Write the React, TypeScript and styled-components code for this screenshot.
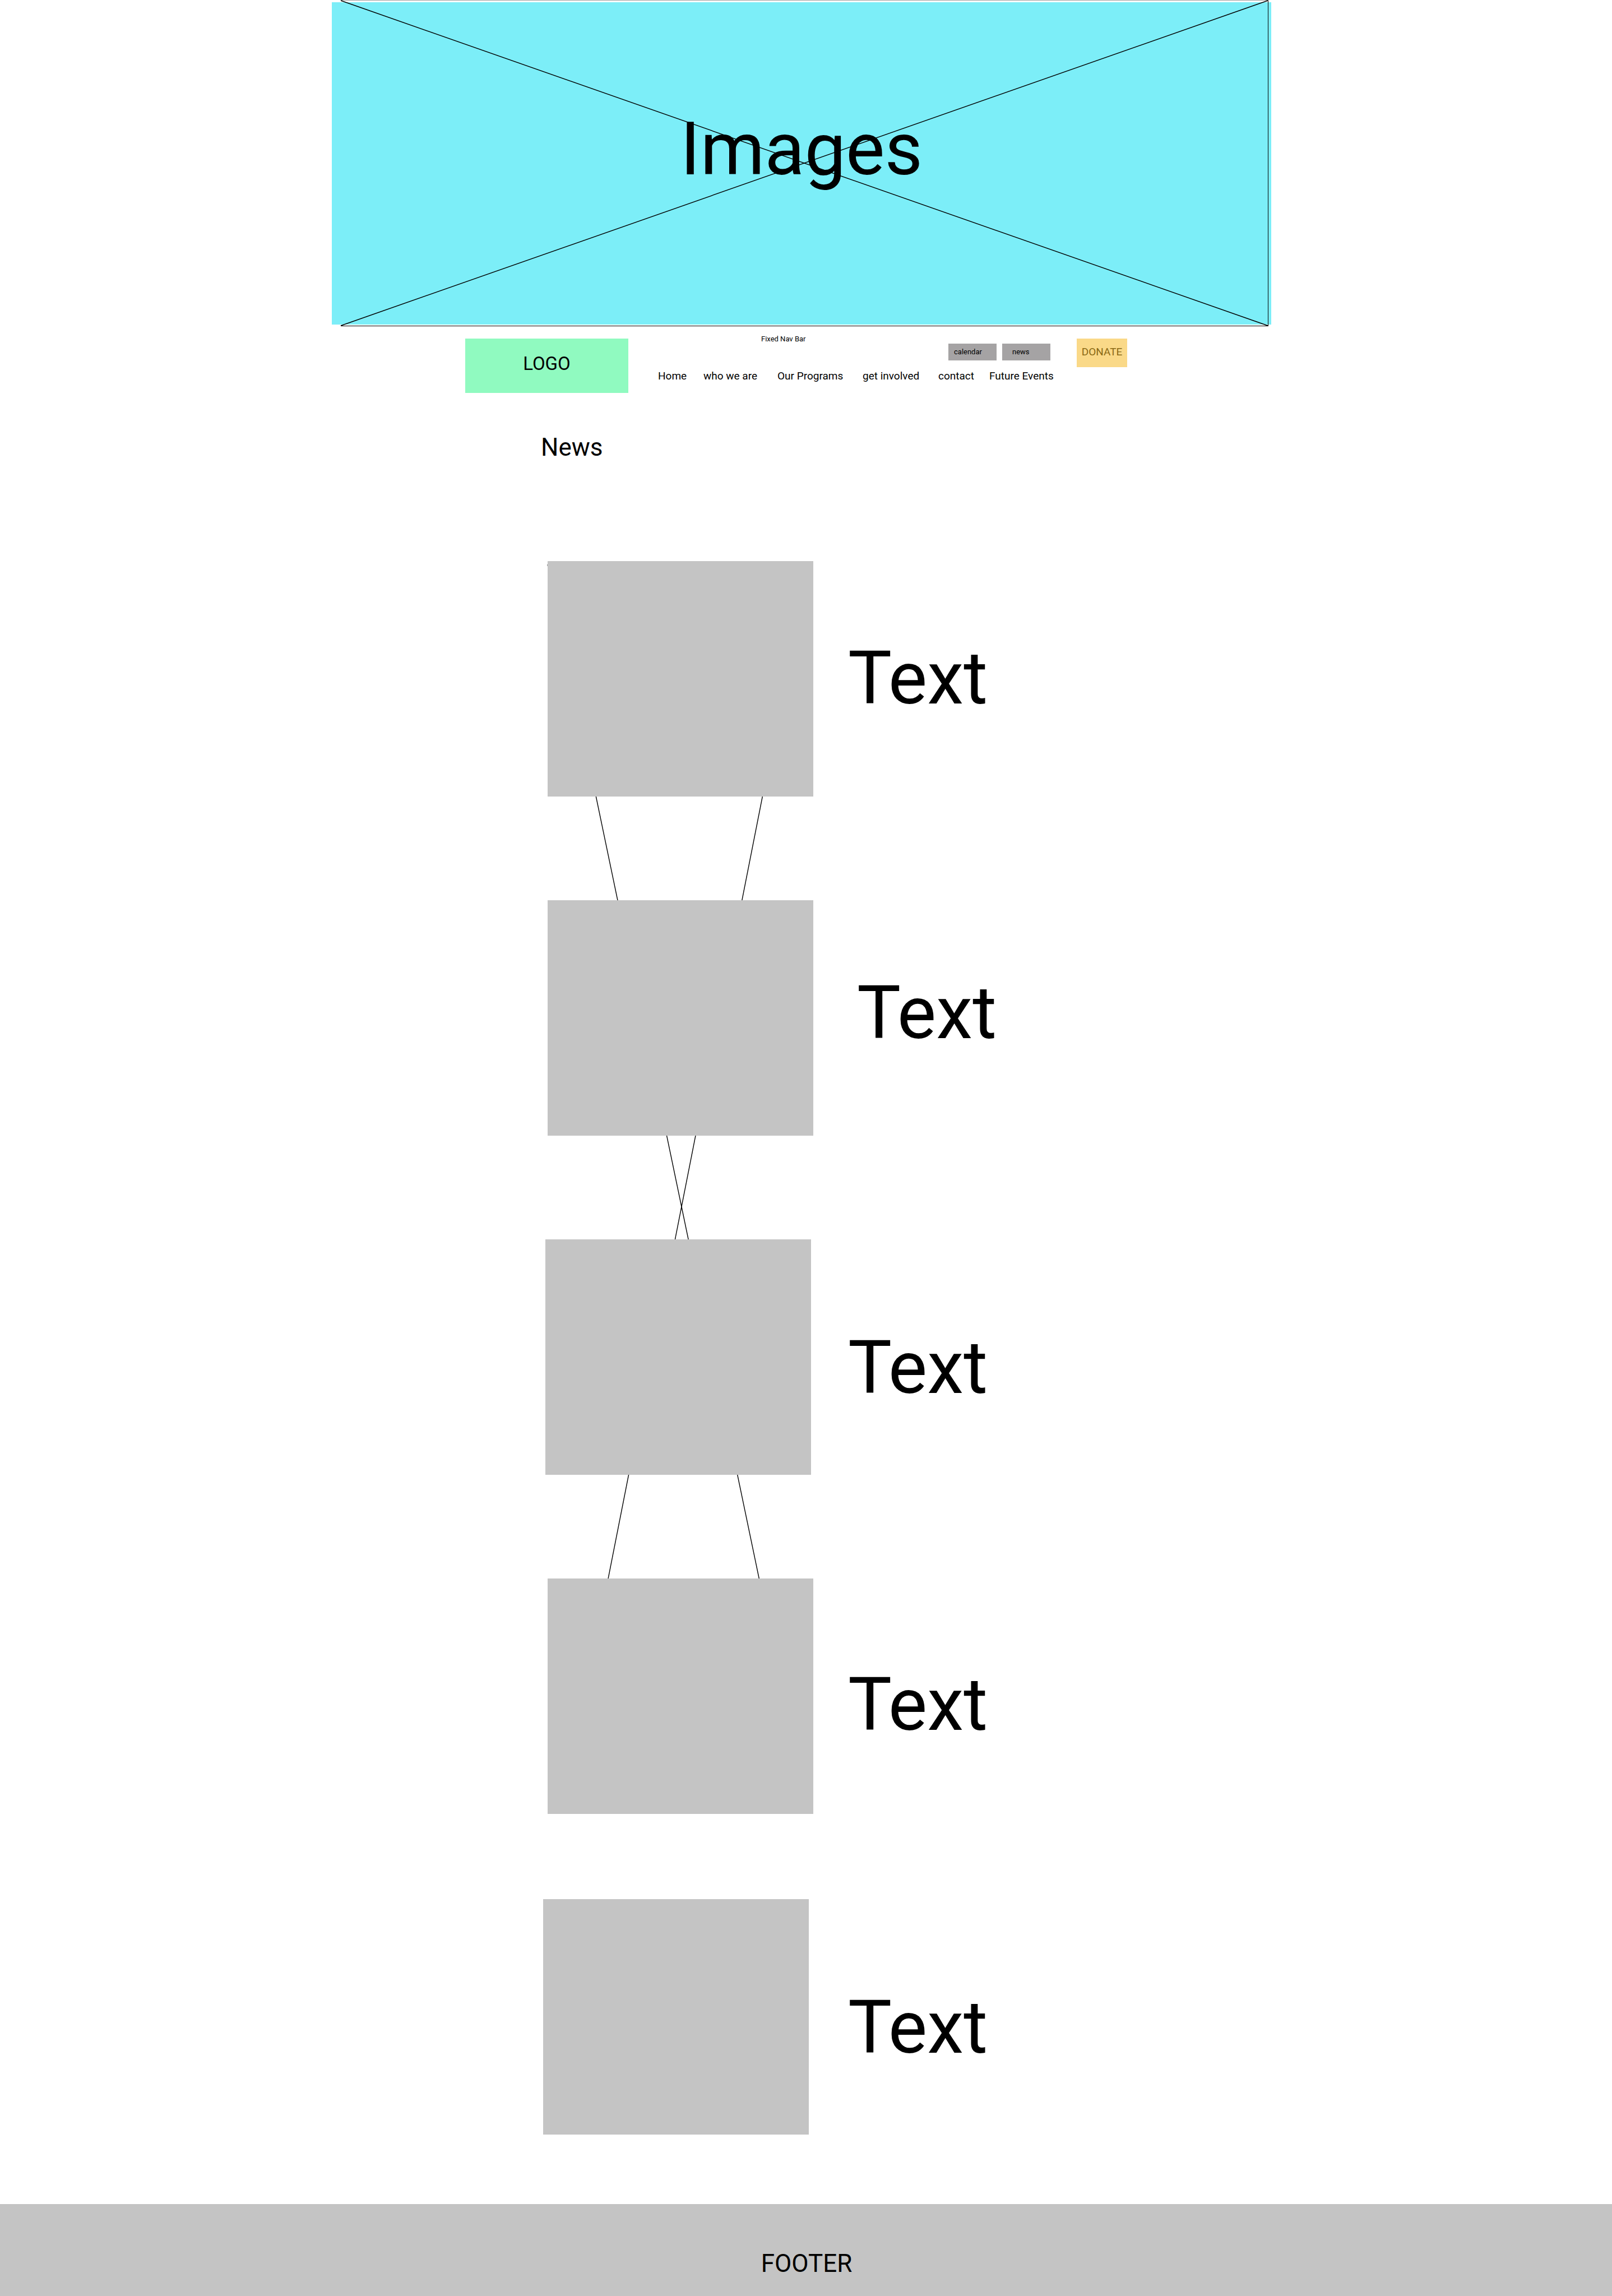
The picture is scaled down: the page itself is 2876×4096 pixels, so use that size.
import React from "react";
import styled, { createGlobalStyle } from "styled-components";

const GlobalStyle = createGlobalStyle`
  *, *::before, *::after { box-sizing: border-box; }
  body {
    margin: 0;
    background: #ffffff;
    color: #000000;
    font-family: Roboto, "Liberation Sans", sans-serif;
  }
  h1, h2, p, ul, figure { margin: 0; padding: 0; font-weight: 400; }
  a { color: inherit; text-decoration: none; }
`;

const Page = styled.div`
  display: flex;
  flex-direction: column;
  min-height: 100vh;
`;

const Container = styled.div`
  width: 100%;
  max-width: 1692px;
  margin: 0 auto;
`;

const HeroArea = styled(Container)`
  padding: 4px 16px 0 0;
`;

const Hero = styled.section`
  position: relative;
  display: flex;
  justify-content: center;
  height: 575px;
  padding-top: 185px;
  background: #7ceef8;
`;

const HeroFrame = styled.div`
  position: absolute;
  inset: -4px 5px -3px 16px;
  border: 1px solid #000000;
  border-top-color: #a0a0a0;
  border-left: 0;
`;

const Drawing = styled.svg`
  display: block;
  width: 100%;
  height: 100%;
  overflow: visible;

  line {
    stroke: #000000;
    stroke-width: 1.4;
  }
`;

const Display = styled.p`
  position: relative;
  font-size: 131px;
  line-height: 154px;
`;

const NavBar = styled(Container)`
  display: grid;
  grid-template-columns: 291px 706px 90px;
  column-gap: 47px;
  justify-content: start;
  align-items: start;
  padding: 25px 0 0 238px;
`;

const Logo = styled.a`
  display: flex;
  justify-content: center;
  height: 97px;
  padding-top: 26px;
  background: #90fac0;
  font-size: 33px;
  line-height: 38px;
`;

const NavCenter = styled.div`
  display: flex;
  flex-direction: column;
  padding-left: 6px;
`;

const NavTop = styled.div`
  display: flex;
  justify-content: space-between;
  align-items: flex-start;
  height: 56px;
  padding-left: 184px;
`;

const NavCaption = styled.p`
  font-size: 13px;
  line-height: 16px;
  margin-top: -7px;
`;

const QuickLinks = styled.div`
  display: flex;
  gap: 10px;
  padding-top: 9px;
`;

const QuickButton = styled.button<{ $inset: number }>`
  width: 86px;
  height: 30px;
  padding: 0 0 0 ${(p) => p.$inset}px;
  border: 0;
  background: #a5a3a4;
  color: #000000;
  font: inherit;
  font-size: 13px;
  line-height: 16px;
  text-align: left;
`;

const Menu = styled.ul`
  display: grid;
  grid-template-columns: 81px 132px 152px 135px 91px auto;
  list-style: none;
  font-size: 19px;
  line-height: 22px;
  white-space: nowrap;
`;

const DonateButton = styled.button`
  height: 51px;
  padding: 0 0 4px;
  border: 0;
  background: #fad988;
  color: #8a6914;
  font: inherit;
  font-size: 19px;
  line-height: 22px;
`;

const News = styled(Container)`
  padding: 71px 0 124px 377px;
`;

const Heading = styled.h1`
  margin: 0 0 177px -4px;
  font-size: 44px;
  line-height: 52px;
`;

const Feed = styled.div`
  position: relative;
  display: flex;
  flex-direction: column;
  gap: 185px;

  & > :last-child {
    margin-top: -33px;
  }
`;

const Connectors = styled.div`
  position: absolute;
  top: 6px;
  left: 8px;
  width: 466px;
  height: 2220px;
`;

const Story = styled.article<{ $indent: number }>`
  position: relative;
  display: grid;
  grid-template-columns: 544px auto;
  justify-content: start;

  & > figure {
    margin-left: ${(p) => p.$indent}px;
  }
`;

const Thumbnail = styled.figure`
  width: 474px;
  height: 420px;
  background: #c4c4c4;
`;

const StoryText = styled(Display)<{ $drop: number; $indent: number }>`
  padding: ${(p) => p.$drop}px 0 0 ${(p) => p.$indent}px;
`;

const Footer = styled.footer`
  display: flex;
  justify-content: center;
  height: 164px;
  padding: 80px 0 0 2px;
  background: #c4c4c4;
  font-size: 44px;
  line-height: 52px;
`;

const links = ["Home", "who we are", "Our Programs", "get involved", "contact", "Future Events"];

const stories = [
  { id: 1, indent: 8, drop: 132, textIndent: 0 },
  { id: 2, indent: 8, drop: 124, textIndent: 16 },
  { id: 3, indent: 4, drop: 152, textIndent: 0 },
  { id: 4, indent: 8, drop: 148, textIndent: 0 },
  { id: 5, indent: 0, drop: 152, textIndent: 0 },
];

export default function App() {
  return (
    <Page>
      <GlobalStyle />
      <HeroArea>
        <Hero>
          <HeroFrame>
            <Drawing aria-hidden="true">
              <line x1="0" y1="0" x2="100%" y2="100%" />
              <line x1="0" y1="100%" x2="100%" y2="0" />
            </Drawing>
          </HeroFrame>
          <Display>Images</Display>
        </Hero>
      </HeroArea>

      <NavBar as="header">
        <Logo href="#">LOGO</Logo>
        <NavCenter>
          <NavTop>
            <NavCaption>Fixed Nav Bar</NavCaption>
            <QuickLinks>
              <QuickButton $inset={10}>calendar</QuickButton>
              <QuickButton $inset={18}>news</QuickButton>
            </QuickLinks>
          </NavTop>
          <nav>
            <Menu>
              {links.map((label) => (
                <li key={label}>
                  <a href="#">{label}</a>
                </li>
              ))}
            </Menu>
          </nav>
        </NavCenter>
        <DonateButton>DONATE</DonateButton>
      </NavBar>

      <News as="main">
        <Heading>News</Heading>
        <Feed>
          <Connectors>
            <Drawing viewBox="0 0 466 2220" aria-hidden="true">
              <line x1="0" y1="0" x2="463" y2="2220" />
              <line x1="465" y1="0" x2="27" y2="2220" />
            </Drawing>
          </Connectors>
          {stories.map((story) => (
            <Story key={story.id} $indent={story.indent}>
              <Thumbnail />
              <StoryText $drop={story.drop} $indent={story.textIndent}>
                Text
              </StoryText>
            </Story>
          ))}
        </Feed>
      </News>

      <Footer>FOOTER</Footer>
    </Page>
  );
}
